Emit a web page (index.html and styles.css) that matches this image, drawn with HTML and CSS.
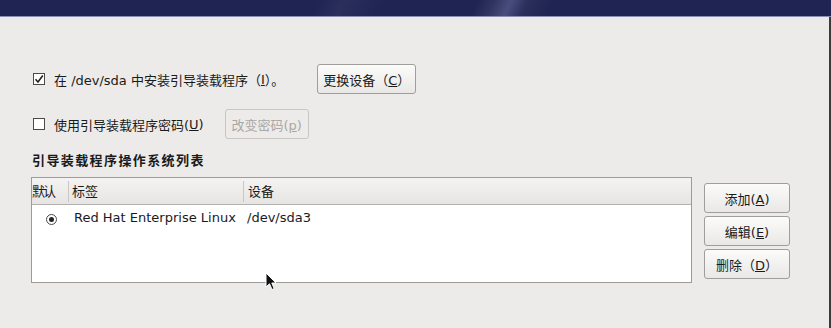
FILE: index.html
```html
<!DOCTYPE html>
<html>
<head>
<meta charset="utf-8">
<link rel="stylesheet" href="styles.css">
</head>
<body>
<div class="banner"></div>
<div class="main">
  <div class="row r1">
    <label class="chk"><span class="box"><svg width="10" height="10" viewBox="0 0 10 10"><path d="M1.5 5.2 L4 8 L8.8 1.5" fill="none" stroke="#222" stroke-width="1.6"/></svg></span>在 /dev/sda 中安装引导装载程序（<u>I</u>）。</label>
    <button class="btn b-change">更换设备（<u>C</u>）</button>
  </div>
  <div class="row r2">
    <label class="chk"><span class="box"></span>使用引导装载程序密码(<u>U</u>)</label>
    <button class="btn disabled b-pass">改变密码(<u>p</u>)</button>
  </div>
  <div class="heading">引导装载程序操作系统列表</div>
  <div class="listarea">
    <div class="tree">
      <div class="thead">
        <div class="c1">默认</div>
        <div class="c2">标签</div>
        <div class="c3">设备</div>
      </div>
      <div class="trow">
        <div class="c1"><span class="radio"><span class="dot"></span></span></div>
        <div class="c2">Red Hat Enterprise Linux</div>
        <div class="c3">/dev/sda3</div>
      </div>
    </div>
    <div class="side">
      <button class="btn sb">添加(<u>A</u>)</button>
      <button class="btn sb">编辑(<u>E</u>)</button>
      <button class="btn sb">删除（<u>D</u>）</button>
    </div>
  </div>
  <svg class="cursor" width="14" height="20" viewBox="0 0 14 20"><path d="M1 1 L1 15 L4.5 11.8 L7 17.5 L9.2 16.6 L6.8 11 L11 11 Z" fill="#111" stroke="#fff" stroke-width="1"/></svg>
</div>
</body>
</html>
```
FILE: styles.css
```css
html, body {
  margin: 0;
  padding: 0;
  background: #edebe9;
}
body {
  width: 831px;
  height: 328px;
  overflow: hidden;
  font-family: "DejaVu Sans", "Noto Sans CJK SC", sans-serif;
  font-size: 13px;
  color: #1a1a1a;
}
.banner {
  height: 16px;
  border-bottom: 1px solid #8b8fb3;
  background:
    linear-gradient(115deg, transparent 0, transparent 57%, rgba(255,255,255,0.08) 59%, rgba(200,200,255,0.25) 61%, rgba(255,255,255,0.05) 63%, transparent 66%),
    linear-gradient(115deg, transparent 0, transparent 38%, rgba(255,255,255,0.05) 41%, transparent 46%),
    #1f2453;
}
.main {
  position: relative;
  height: 311px;
  border-right: 2px solid #3b3b3b;
  box-sizing: border-box;
  padding-left: 33px;
  padding-top: 47px;
}
.row {
  display: flex;
  align-items: center;
  height: 30px;
}
.r2 {
  margin-top: 15px;
}
.chk {
  display: flex;
  align-items: center;
  white-space: nowrap;
}
.box {
  width: 10px;
  height: 10px;
  border: 1px solid #4a4a4a;
  background: #fff;
  margin-right: 9px;
  display: inline-flex;
  align-items: center;
  justify-content: center;
}
.box svg { display: block; }
.btn {
  font: inherit;
  color: #1a1a1a;
  height: 30px;
  border: 1px solid #a09e9b;
  border-radius: 3px;
  background: linear-gradient(#fbfbfa, #e9e8e6);
  padding: 0;
  box-sizing: border-box;
  white-space: nowrap;
}
.b-change {
  margin-left: 33px;
  width: 99px;
}
.b-pass {
  margin-left: 21px;
  width: 84px;
}
.btn.disabled {
  color: #a9a7a4;
  border-color: #c9c7c4;
  background: #edebe9;
}
.heading {
  font-weight: bold;
  margin-top: 14px;
  height: 16px;
  line-height: 16px;
  margin-left: -1px;
  letter-spacing: 1.4px;
}
.listarea {
  display: flex;
  margin-top: 8px;
  margin-left: -2px;
}
.tree {
  width: 661px;
  height: 106px;
  box-sizing: border-box;
  border: 1px solid #9d9b98;
  background: #fff;
}
.thead {
  display: flex;
  height: 27px;
  box-sizing: border-box;
  border-bottom: 1px solid #b3b1ae;
  background: linear-gradient(#f4f3f2, #e6e5e3);
  align-items: center;
}
.thead > div {
  height: 21px;
  line-height: 21px;
}
.thead > div, .trow > div {
  box-sizing: border-box;
  white-space: nowrap;
}
.thead .c2, .thead .c3 {
  border-left: 1px solid #c9c7c4;
}
.c1 { width: 36px; flex: none; padding-left: 0; }
.c2 { width: 175px; flex: none; padding-left: 3px; }
.c3 { flex: 1; padding-left: 4px; }
.thead .c1 { letter-spacing: -2px; }
.trow {
  display: flex;
  height: 24px;
  align-items: center;
}
.trow .c2 { padding-left: 6px; }
.trow .c3 { padding-left: 4px; }
.radio {
  display: inline-flex;
  width: 11px;
  height: 11px;
  border: 1px solid #4a4a4a;
  border-radius: 50%;
  margin-left: 14px;
  align-items: center;
  justify-content: center;
  box-sizing: border-box;
}
.dot {
  width: 5px;
  height: 5px;
  border-radius: 50%;
  background: #222;
}
.side {
  display: flex;
  flex-direction: column;
  gap: 3px;
  margin-left: 12px;
  margin-top: 6px;
}
.sb {
  width: 86px;
  height: 30px;
}
.cursor {
  position: absolute;
  left: 265px;
  top: 255px;
}
```
